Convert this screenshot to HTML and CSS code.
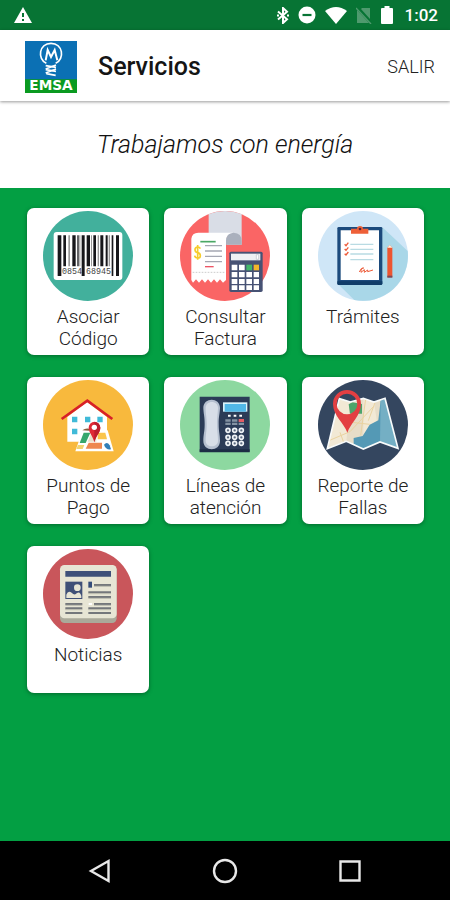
FILE: index.html
```html
<!DOCTYPE html>
<html lang="es">

<head>
    <title>Servicios</title>
    <meta charset="UTF-8">
    <meta name="viewport" content="width=device-width, initial-scale=1.0">
    <link rel="stylesheet" href="styles.css">
</head>
<body>
    <div class="status">
        <svg class="status-warning" viewBox="0 0 18 16" width="18" height="16" fill="#fff">
            <path d="M9 0 L18 16 H0 Z"/>
            <path d="M8 6h2v4H8z M8 12h2v2H8z" fill="#077434"/>
        </svg>
        <div class="status-icons">
            <svg viewBox="0 0 12 17" width="12" height="17" fill="none" stroke="#fff" stroke-width="2">
                <path d="M1 4.5 L10 12.3 L6 16 V1 L10 4.7 L1 12.5"/>
                <path d="M0 8.5h2 M10 8.5h2" stroke-width="2"/>
            </svg>
            <svg viewBox="0 0 18 18" width="18" height="18">
                <circle cx="9" cy="9" r="8.5" fill="#fff"/>
                <path d="M4.5 9h9" stroke="#077434" stroke-width="2.2"/>
            </svg>
            <svg viewBox="0 0 22 17" width="22" height="17">
                <path d="M0 4 Q11 -4 22 4 L11 17 Z" fill="#fff"/>
            </svg>
            <svg viewBox="0 0 16 17" width="16" height="17">
                <path d="M6 1 H14 V12 L5 2 Z M1 3 L13 16 H1 Z" fill="#4f9a6e"/>
                <path d="M0 1 L15 17" stroke="#4f9a6e" stroke-width="1.3"/>
            </svg>
            <svg viewBox="0 0 12 18" width="12" height="18">
                <path d="M3.500 0h5v2H11q1 0 1 1v14q0 1-1 1H1q-1 0-1-1V3q0-1 1-1h2.500z" fill="#fff"/>
            </svg>
            <span class="clock">1:02</span>
        </div>
    </div>

    <header class="header">
        <svg class="logo" viewBox="0 0 156 156" role="img" aria-label="EMSA">
            <path d="M0 0h156v156H0z" fill="#0b70b4"/>
            <path d="M0 115h156v41H0z" fill="#0a9a20"/>
            <path d="M64 67 C36 54 42 7 78 7 C114 7 120 54 92 67" fill="none" stroke="#fff" stroke-width="5"/>
            <path d="M62 58 L68 27 L78 48 L89 27 L97 58" fill="none" stroke="#fff" stroke-width="6"/>
            <path d="M62 74 L93 79 M62 86 L93 91 M64 98 L92 103 M93 72 L62 84 M93 84 L62 96" fill="none" stroke="#fff" stroke-width="5"/>
            <text class="logo-text" x="78" y="147" text-anchor="middle">EMSA</text>
        </svg>
        <h1 class="title">Servicios</h1>
        <button class="logout" type="button">SALIR</button>
    </header>

    <p class="tagline">Trabajamos con energía</p>

    <main class="services">
        <button class="card" type="button">
            <svg class="icon" viewBox="0 0 270 270">
                <circle cx="135" cy="135" r="135" fill="#42b09c"/>
                <rect x="32" y="63" width="206" height="144" rx="9" fill="#fff"/>
                <g fill="#17171b">
                    <path d="M44 73h11v122H44z M61 73h8v93h-8z M88 73h10v93H88z M103 73h4v93h-4z M116 73h9v122h-9z M131 73h10v93h-10z M151 73h8v93h-8z M172 73h9v93h-9z M188 73h6v93h-6z M206 73h5v122h-5z M219 73h9v122h-9z"/>
                </g>
                <path d="M76 73h5v93h-5z M109 73h3v93h-3z M144 73h3v93h-3z M164 73h4v93h-4z M197 73h4v93h-4z" fill="#999"/>
                <text class="digits" x="57" y="190">0854</text>
                <text class="digits" x="129" y="190">68945</text>
            </svg>
            <span class="label">Asociar Código</span>
        </button>

        <button class="card" type="button">
            <svg class="icon" viewBox="0 0 270 270">
                <circle cx="135" cy="135" r="135" fill="#fa6565"/>
                <path d="M86 9 Q135 -9 185 9 V101 H140 V67 H86 Z" fill="#d9dde6"/>
                <path d="M137 101 V83 Q141 65 161 65 Q185 66 185 90 V101 Z" fill="#aab0bd"/>
                <path d="M34 83 Q36 65 55 65 H160 Q138 66 138 90 V207 L129 215 L120 205 L111 215 L102 205 L93 215 L84 205 L75 215 L66 205 L57 215 L48 205 L39 215 L34 207 Z" fill="#fff"/>
                <path d="M61 92h46" stroke="#4aa865" stroke-width="5"/>
                <path d="M75 104h51 M75 120h51 M75 136h51 M75 152h51" stroke="#a5a8b3" stroke-width="4"/>
                <path d="M75 167h26" stroke="#ed5565" stroke-width="4"/>
                <path d="M38 184h96" stroke="#ccc" stroke-width="3" stroke-dasharray="5 4"/>
                <path d="M61 113 Q59 108 53 108 Q45 108 45 116 Q45 123 53 125 Q61 127 61 134 Q61 141 53 141 Q45 141 44 134 M53 102v44" fill="none" stroke="#f6cc2c" stroke-width="5"/>
                <rect x="148" y="122" width="100" height="121" rx="5" fill="#475274"/>
                <path d="M153 128h88v20h-88z" fill="#eef0f4"/>
                <path d="M229 131h7v14h-7z" fill="#fff" stroke="#b9bdc8" stroke-width="2"/>
                <path d="M155 161h17v17h-17z M177 161h17v17h-17z M155 183h17v16h-17z M177 183h17v16h-17z M199 183h17v16h-17z M221 183h16v16h-16z M155 204h17v15h-17z M177 204h17v15h-17z M199 204h17v15h-17z M221 204h16v15h-16z M155 223h17v14h-17z M177 223h17v14h-17z M199 223h17v14h-17z M221 223h16v14h-16z" fill="#fff"/>
                <path d="M199 161h17v17h-17z" fill="#42b66a"/>
                <path d="M221 161h16v17h-16z" fill="#f4b62a"/>
            </svg>
            <span class="label">Consultar Factura</span>
        </button>

        <button class="card" type="button">
            <svg class="icon" viewBox="0 0 270 270">
                <circle cx="135" cy="135" r="135" fill="#cfe6f7"/>
                <path d="M193 49 L269 120 A135 135 0 0 1 109 267 L60 219 Z" fill="#a9d7e8"/>
                <rect x="58" y="48" width="135" height="173" rx="4" fill="#1b4a7c"/>
                <path d="M58 211h135v7q0 4-4 4H62q-4 0-4-4z" fill="#103d69"/>
                <path d="M68 58h115v149H68z" fill="#fff"/>
                <path d="M99 53h18q0-8 9-8t9 8h16v15H99z" fill="#ee6038"/>
                <circle cx="126" cy="54" r="4" fill="#5b2534"/>
                <path d="M97 100h69 M97 115h69 M97 129h69 M97 146h69" stroke="#b9dbe3" stroke-width="4"/>
                <path d="M80 100l4 4 7-9 M80 114l4 4 7-9 M80 128l4 4 7-9" fill="none" stroke="#ed5b39" stroke-width="4"/>
                <path d="M124 183 Q129 169 137 171 Q128 171 129 184 L139 176 V184 L149 177 V182 L165 177" fill="none" stroke="#ed5b39" stroke-width="3"/>
                <path d="M208 110 L215 102 L223 110 V199 H208z" fill="#ed5530"/>
                <path d="M208 110 L215 102 L223 110z" fill="#fff1dc"/>
                <path d="M208 194h15v6h-15z" fill="#7a4858"/>
            </svg>
            <span class="label">Trámites</span>
        </button>

        <button class="card" type="button">
            <svg class="icon" viewBox="0 0 270 270">
                <circle cx="135" cy="135" r="135" fill="#f8b93d"/>
                <path d="M73 111 L132 66 L192 111 V185 H73z" fill="#fff"/>
                <path d="M56 117 L133 62 L208 117" fill="none" stroke="#d82028" stroke-width="8"/>
                <path d="M87 110h16v17H87z M126 110h16v17h-16z M163 110h16v17h-16z M87 146h16v17H87z" fill="#40bad8"/>
                <path d="M119 151 H194 L212 214 H97z" fill="#fff"/>
                <path d="M122 158h20l-14 31h-18z" fill="#36a66c"/>
                <path d="M145 158h15v27h-26z" fill="#e8e1cb"/>
                <path d="M164 158h23l5 20h-28z" fill="#fac54b"/>
                <path d="M137 188h40v18h-49z" fill="#ee8850"/>
                <path d="M105 195h19l-5 12h-19z" fill="#f2d36f"/>
                <path d="M183 194 Q192 183 200 196 L204 208 Q189 211 183 194z" fill="#327fb8"/>
                <path d="M118 151q10-8 20-5v6z" fill="#8a5b3b"/>
                <path d="M154 187 C150 168 137 158 137 143 A17 17 0 0 1 172 143 C172 158 158 168 154 187z" fill="#df2936"/>
                <path d="M154 187 C158 168 172 158 172 143 Q170 127 154 126z" fill="#bd1d2d"/>
                <circle cx="154" cy="142" r="8" fill="#fff"/>
            </svg>
            <span class="label">Puntos de Pago</span>
        </button>

        <button class="card" type="button">
            <svg class="icon" viewBox="0 0 270 270">
                <circle cx="135" cy="135" r="135" fill="#8dd8a0"/>
                <path d="M59 50h150v165H59z" fill="#2b3b57"/>
                <path d="M59 208h150v9H59z" fill="#1d2c45"/>
                <path d="M70 84 C70 51 120 51 120 84 C119 104 116 108 116 132 C116 158 120 162 120 182 C120 216 70 216 70 182 C70 162 74 158 74 132 C74 108 71 104 70 84z" fill="#b6c0d0"/>
                <path d="M77 84 C77 60 114 60 114 84 C113 104 111 108 111 132 C111 158 114 162 114 182 C114 204 77 204 77 182 C77 162 80 158 80 132 C80 108 77 104 77 84z" fill="#d8dee8"/>
                <path d="M129 67h73v28h-73z" fill="#d8f3fb"/>
                <path d="M134 72h64v23h-64z" fill="#51b7e7"/>
                <path d="M144 104h8v6h-8z M161 104h8v6h-8z M178 104h8v6h-8z" fill="#fff"/>
                <path d="M136 118h16v7h-16z M156 118h16v7h-16z M136 128h16v7h-16z M156 128h16v7h-16z M176 128h16v7h-16z" fill="#8492a3"/>
                <path d="M176 117h16v9h-16z" fill="#e45d65"/>
                <g fill="#5d6b80" stroke="#f0f3f7" stroke-width="5">
                    <circle cx="144" cy="151" r="6"/><circle cx="164" cy="151" r="6"/><circle cx="184" cy="151" r="6"/>
                    <circle cx="144" cy="172" r="6"/><circle cx="164" cy="172" r="6"/><circle cx="184" cy="172" r="6"/>
                    <circle cx="144" cy="190" r="6"/><circle cx="164" cy="190" r="6"/><circle cx="184" cy="190" r="6"/>
                </g>
            </svg>
            <span class="label">Líneas de atención</span>
        </button>

        <button class="card" type="button">
            <svg class="icon" viewBox="0 0 270 270">
                <circle cx="135" cy="135" r="135" fill="#34465f"/>
                <path d="M64 56 L97 66 L136 55 L168 66 L201 55 L240 205 L186 186 L136 207 L85 184 L28 206z" fill="#f2e9d5"/>
                <path d="M97 66 L136 55 V207 L85 184z M168 66 L201 55 L240 205 L186 186z" fill="#dfd6bf" opacity=".6"/>
                <path d="M188 61 L201 55 L240 205 L186 186 L136 207 L107 192 V174 L134 168 L155 134 L181 121z" fill="#5499b5"/>
                <path d="M188 61 L201 55 L240 205 L186 186z" fill="#74afc4"/>
                <path d="M92 73 L103 67 L132 72 V101 H96z" fill="#4da46b"/>
                <path d="M35 181 L96 155 L168 78 M77 187 L66 157 M101 127 L155 133 M143 57 L128 166 M171 68 L151 122" fill="none" stroke="#ead3a0" stroke-width="3"/>
                <path d="M64 56 L97 66 L136 55 L168 66 L201 55 L240 205 L186 186 L136 207 L85 184 L28 206z" fill="none" stroke="#f8fbfb" stroke-width="5"/>
                <path fill-rule="evenodd" d="M88 158 C79 130 45 107 45 72 A42 42 0 0 1 129 72 C129 107 97 130 88 158z M87 41 A31 31 0 1 0 87 103 A31 31 0 1 0 87 41z" fill="#e33f42"/>
            </svg>
            <span class="label">Reporte de Fallas</span>
        </button>

        <button class="card" type="button">
            <svg class="icon" viewBox="0 0 270 270">
                <circle cx="135" cy="135" r="135" fill="#c9565b"/>
                <rect x="51" y="50" width="170" height="172" rx="14" fill="#aaa99a"/>
                <rect x="51" y="48" width="170" height="160" rx="13" fill="#e7e5d4"/>
                <path d="M67 66h137v17H67z" fill="#3e5079"/>
                <path d="M67 98h51v52H67z" fill="#3f5077"/>
                <circle cx="103" cy="116" r="10" fill="#e7e5d4"/>
                <path d="M70 147 V137 Q75 123 86 131 Q95 141 102 132 Q111 126 115 141 V147z" fill="#e7e5d4"/>
                <path d="M136 98h11v18h-11z" fill="#344c79"/>
                <path d="M153 108h51 M136 130h68 M136 144h68 M153 165h51 M136 178h68 M136 192h68 M67 165h51 M67 178h51 M67 192h51" stroke="#74777b" stroke-width="6"/>
                <path d="M153 112h51 M136 134h68 M136 148h68 M153 169h51 M136 182h68 M67 169h51 M67 182h51" stroke="#b9b9ad" stroke-width="3"/>
                <path d="M137 165h10" stroke="#fff" stroke-width="6"/>
            </svg>
            <span class="label">Noticias</span>
        </button>
    </main>

    <nav class="navbar">
        <button class="nav-button" type="button" aria-label="Atrás">
            <svg viewBox="0 0 26 26" width="26" height="26"><path d="M21.500 3 V23 L4 13z"/></svg>
        </button>
        <button class="nav-button" type="button" aria-label="Inicio">
            <svg viewBox="0 0 26 26" width="26" height="26"><circle cx="13" cy="13" r="11"/></svg>
        </button>
        <button class="nav-button" type="button" aria-label="Recientes">
            <svg viewBox="0 0 26 26" width="26" height="26"><path d="M3.500 3.500h19v19h-19z"/></svg>
        </button>
    </nav>
</body>
</html>
```

FILE: styles.css
```css
* {
    box-sizing: border-box;
}
body {
    display: flex;
    flex-direction: column;
    min-height: 100vh;
    margin: 0;
    font-family: Roboto, sans-serif;
    background-color: #039f43;
}
button {
    border: 0;
    padding: 0;
    font-family: inherit;
    cursor: pointer;
}

/****** STATUS BAR ******/
.status {
    display: flex;
    align-items: center;
    justify-content: space-between;
    height: 30px;
    padding: 0 12px 0 14px;
    background-color: #077434;
}
.status-icons {
    display: flex;
    align-items: center;
    gap: 9px;
}
.clock {
    margin-left: 3px;
    font-size: 17px;
    font-weight: 500;
    line-height: 30px;
    color: #fff;
}

/****** HEADER ******/
.header {
    position: relative;
    display: flex;
    align-items: center;
    height: 71px;
    padding: 2px 15px 0 25px;
    background-color: #fff;
    box-shadow: 0 1px 3px rgba(0, 0, 0, 0.4);
}
.logo {
    width: 52px;
    height: 52px;
}
.logo-text {
    font-family: "DejaVu Sans", sans-serif;
    font-size: 41px;
    font-weight: 700;
    fill: #fff;
}
.title {
    flex: 1;
    margin: 0 0 0 21px;
    font-size: 25px;
    font-weight: 500;
    color: #151515;
}
.logout {
    background: none;
    font-size: 18px;
    font-weight: 300;
    color: #222;
}
.tagline {
    margin: 0;
    padding: 29px 0 28px;
    font-size: 25px;
    font-style: italic;
    font-weight: 300;
    line-height: 30px;
    text-align: center;
    color: #111;
    background-color: #fff;
}

/****** SERVICES ******/
.services {
    flex: 1;
    display: grid;
    grid-template-columns: repeat(3, 1fr);
    grid-auto-rows: 147px;
    align-content: start;
    gap: 22px 15px;
    padding: 20px 26px 20px 27px;
}
.card {
    display: flex;
    flex-direction: column;
    align-items: center;
    padding: 3px 14px;
    background-color: #fff;
    border-radius: 7px;
    box-shadow: 0 1px 4px rgba(0, 0, 0, 0.35);
}
.icon {
    flex: none;
    width: 90px;
    height: 90px;
    overflow: visible;
}
.digits {
    font-family: "Liberation Mono", monospace;
    font-size: 25px;
    fill: #444;
}
.label {
    margin-top: 5px;
    font-size: 19px;
    font-weight: 300;
    line-height: 22px;
    color: #222;
}

/****** NAVIGATION BAR ******/
.navbar {
    display: flex;
    justify-content: center;
    gap: 99px;
    height: 59px;
    background-color: #000;
}
.nav-button {
    display: flex;
    align-items: center;
    background: none;
}
.nav-button svg {
    fill: none;
    stroke: #e8e8e8;
    stroke-width: 2.4;
}
```
